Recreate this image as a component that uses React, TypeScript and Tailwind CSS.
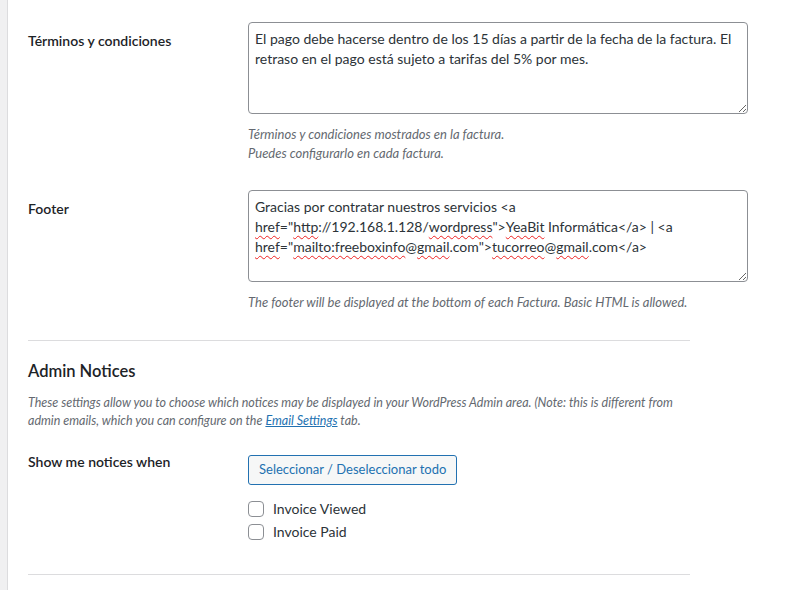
import React from "react";

const font = { fontFamily: "Lato, 'Noto Sans', sans-serif" };

function Squiggle({ children }: { children: React.ReactNode }) {
  return (
    <span className="underline decoration-wavy decoration-[#e22] decoration-1 underline-offset-[3px]">
      {children}
    </span>
  );
}

function Field({ children, height }: { children: React.ReactNode; height: string }) {
  return (
    <div
      className={`w-[500px] ${height} resize-y overflow-hidden rounded-[4px] border border-[#8c8f94] bg-white px-[6px] py-[6px] text-[14px] leading-[20px] text-[#2c3338]`}
    >
      {children}
    </div>
  );
}

function Row({ label, children }: { label: string; children: React.ReactNode }) {
  return (
    <div className="grid grid-cols-[220px_500px]">
      <div className="pt-[9px] text-[14px] font-semibold leading-[20px] text-[#1d2327]">{label}</div>
      <div>{children}</div>
    </div>
  );
}

function Check({ label }: { label: string }) {
  return (
    <label className="flex h-[23px] items-center gap-[9px] text-[14px] text-[#2c3338]">
      <span className="h-[16px] w-[16px] rounded-[4px] border border-[#8c8f94] bg-white" />
      {label}
    </label>
  );
}

export default function App() {
  return (
    <div className="flex min-h-[590px] bg-white" style={font}>
      <div className="w-[8px] shrink-0 border-r border-[#dcdcde] bg-[#f0f0f1]" />
      <div className="flex-1 pl-[20px] pt-[22px]">
        <Row label="Términos y condiciones">
          <Field height="h-[92px]">
            El pago debe hacerse dentro de los 15 días a partir de la fecha de la factura. El retraso en el pago está
            sujeto a tarifas del 5% por mes.
          </Field>
          <p className="mt-[11px] text-[13px] italic leading-[19px] text-[#646970]">
            Términos y condiciones mostrados en la factura.
            <br />
            Puedes configurarlo en cada factura.
          </p>
        </Row>

        <div className="mt-[27px]">
          <Row label="Footer">
            <Field height="h-[92px]">
              Gracias por contratar nuestros servicios &lt;a <Squiggle>href</Squiggle>="<Squiggle>http</Squiggle>
              ://192.168.1.128/<Squiggle>wordpress</Squiggle>"&gt;<Squiggle>YeaBit</Squiggle> Informática&lt;/a&gt; |
              &lt;a <Squiggle>href</Squiggle>="<Squiggle>mailto:freeboxinfo</Squiggle>@<Squiggle>gmail</Squiggle>
              .com"&gt;<Squiggle>tucorreo</Squiggle>@<Squiggle>gmail</Squiggle>.com&lt;/a&gt;
            </Field>
            <p className="mt-[11px] text-[13px] italic leading-[19px] text-[#646970]">
              The footer will be displayed at the bottom of each Factura. Basic HTML is allowed.
            </p>
          </Row>
        </div>

        <hr className="mt-[28px] w-[662px] border-t border-[#dcdcde]" />

        <h2 className="mt-[19px] text-[16.5px] font-semibold leading-[22px] text-[#1d2327]">Admin Notices</h2>
        <p className="mt-[12px] w-[660px] text-[12.5px] italic leading-[18px] text-[#646970]">
          These settings allow you to choose which notices may be displayed in your WordPress Admin area. (Note: this
          is different from admin emails, which you can configure on the{" "}
          <a className="text-[#2271b1] underline">Email Settings</a> tab.
        </p>

        <div className="mt-[25px] grid grid-cols-[220px_500px]">
          <div className="-mt-[3px] text-[14px] font-semibold leading-[20px] text-[#1d2327]">Show me notices when</div>
          <div>
            <button className="h-[30px] rounded-[3px] border border-[#2271b1] bg-[#f6f7f7] px-[10px] text-[13px] text-[#2271b1]">
              Seleccionar / Deseleccionar todo
            </button>
            <div className="mt-[12px] flex flex-col">
              <Check label="Invoice Viewed" />
              <Check label="Invoice Paid" />
            </div>
          </div>
        </div>

        <hr className="mt-[31px] w-[662px] border-t border-[#dcdcde]" />
      </div>
    </div>
  );
}
